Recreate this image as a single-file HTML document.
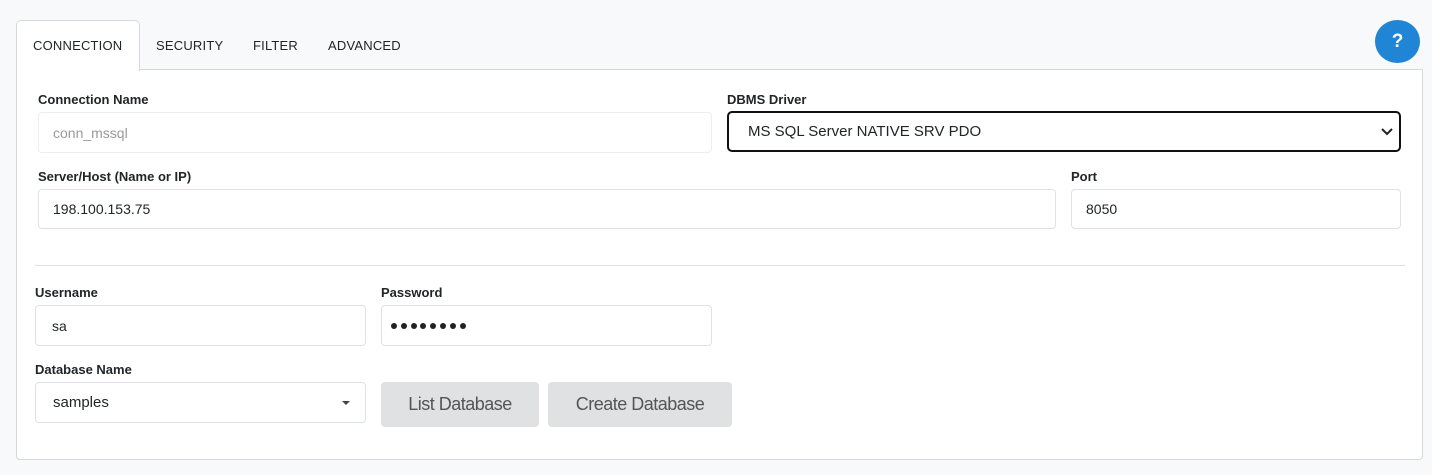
<!DOCTYPE html>
<html><head><style>
body{margin:0;width:1432px;height:475px;background:#f8f9fa;font-family:"Liberation Sans",sans-serif;position:relative;overflow:hidden}
.a{position:absolute;box-sizing:border-box}
.lbl{font-size:13px;font-weight:bold;color:#212529}
.inp{background:#fff;border:1px solid #dee2e6;border-radius:4px;font-size:14px;color:#212529;padding-left:14px;display:flex;align-items:center}
.tab{font-size:13px;color:#212529;top:38px;letter-spacing:0.2px}
.btn{background:#e0e1e3;border-radius:4px;color:#555;font-size:18px;display:flex;align-items:center;justify-content:center;letter-spacing:-0.5px}
.d{width:6px;height:6px;border-radius:50%;background:#222;margin-right:3.8px;flex:none}
</style></head><body>
<div class="a" style="left:16px;top:69px;width:1407px;height:391px;background:#fff;border:1px solid #d6d8db;border-radius:0 0 4px 4px"></div>
<div class="a" style="left:16px;top:20px;width:124px;height:51px;background:#fff;border:1px solid #d6d8db;border-bottom:none;border-radius:5px 5px 0 0"></div>
<div class="a tab" style="left:33px">CONNECTION</div>
<div class="a tab" style="left:156px">SECURITY</div>
<div class="a tab" style="left:253px">FILTER</div>
<div class="a tab" style="left:328px">ADVANCED</div>
<div class="a" style="left:1375px;top:20px;width:45px;height:43px;border-radius:50%;background:#2185d5;color:#fff;font-weight:bold;font-size:19px;display:flex;align-items:center;justify-content:center">?</div>

<div class="a lbl" style="left:38px;top:92px">Connection Name</div>
<div class="a inp" style="left:38px;top:112px;width:674px;height:41px;color:#999;border-color:#eceef0">conn_mssql</div>
<div class="a lbl" style="left:727px;top:92px">DBMS Driver</div>
<div class="a inp" style="left:727px;top:111px;width:674px;height:41px;border:2px solid #111;border-radius:5px;padding-left:19px;font-size:15px">MS SQL Server NATIVE SRV PDO
<svg style="position:absolute;right:6px;top:15px" width="12" height="8" viewBox="0 0 12 8"><path d="M1 1l5 5 5-5" stroke="#222" stroke-width="2" fill="none"/></svg></div>

<div class="a lbl" style="left:38px;top:169px">Server/Host (Name or IP)</div>
<div class="a inp" style="left:38px;top:189px;width:1018px;height:40px">198.100.153.75</div>
<div class="a lbl" style="left:1071px;top:169px">Port</div>
<div class="a inp" style="left:1071px;top:189px;width:330px;height:40px">8050</div>

<div class="a" style="left:35px;top:265px;width:1370px;height:1px;background:#dee2e6"></div>

<div class="a lbl" style="left:35px;top:285px">Username</div>
<div class="a inp" style="left:35px;top:305px;width:331px;height:41px;padding-left:16px">sa</div>
<div class="a lbl" style="left:381px;top:285px">Password</div>
<div class="a inp" style="left:381px;top:305px;width:331px;height:41px;padding-left:9px"><div class="d"></div><div class="d"></div><div class="d"></div><div class="d"></div><div class="d"></div><div class="d"></div><div class="d"></div><div class="d"></div></div>

<div class="a lbl" style="left:35px;top:362px">Database Name</div>
<div class="a inp" style="left:35px;top:382px;width:331px;height:41px;padding-left:17px;font-size:15px">samples
<div style="position:absolute;right:15px;top:18px;border-left:4px solid transparent;border-right:4px solid transparent;border-top:4px solid #444"></div></div>
<div class="a btn" style="left:381px;top:382px;width:158px;height:45px">List Database</div>
<div class="a btn" style="left:548px;top:382px;width:184px;height:45px">Create Database</div>
</body></html>
